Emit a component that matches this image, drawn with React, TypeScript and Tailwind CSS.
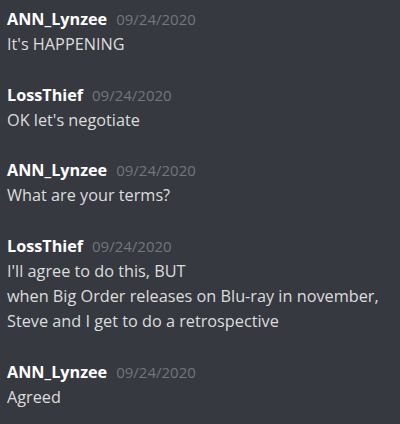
const messages = [
  { author: "ANN_Lynzee", lines: ["It's HAPPENING"] },
  { author: "LossThief", lines: ["OK let's negotiate"] },
  { author: "ANN_Lynzee", lines: ["What are your terms?"] },
  {
    author: "LossThief",
    lines: [
      "I'll agree to do this, BUT",
      "when Big Order releases on Blu-ray in november,",
      "Steve and I get to do a retrospective",
    ],
  },
  { author: "ANN_Lynzee", lines: ["Agreed"] },
];

export default function App() {
  return (
    <div
      className="w-[400px] h-[424px] bg-[#36393f] px-[7px] pt-[7px] flex flex-col gap-[25.2px] overflow-hidden"
      style={{ fontFamily: '"Open Sans", "Noto Sans", sans-serif' }}
    >
      {messages.map((m, i) => (
        <div key={i} className="flex flex-col">
          <div className="flex items-baseline gap-[9px] h-[25.2px]">
            <span className="text-[16.2px] font-bold text-white leading-[25.2px]">
              {m.author}
            </span>
            <span className="text-[15px] text-[#72767d]">09/24/2020</span>
          </div>
          {m.lines.map((l, j) => (
            <div key={j} className="text-[16.25px] text-[#dcddde] leading-[25.2px] whitespace-nowrap">
              {l}
            </div>
          ))}
        </div>
      ))}
    </div>
  );
}
